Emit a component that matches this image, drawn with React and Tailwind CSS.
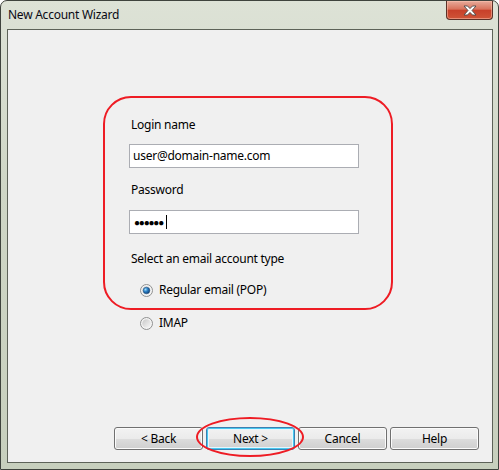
import React from 'react';

const font = "font-['Noto_Sans',sans-serif]";

const Radio = ({ checked, id }) => (
    <svg width="13" height="13" viewBox="0 0 13 13">
        <defs>
            <linearGradient id={`ring-${id}`} x1="0" y1="0" x2="1" y2="1">
                <stop offset="0" stopColor="#c8c8c8" />
                <stop offset="1" stopColor="#f8f8f8" />
            </linearGradient>
            <radialGradient id={`dot-${id}`} cx="0.35" cy="0.35" r="0.7">
                <stop offset="0" stopColor="#9fdcf8" />
                <stop offset="0.45" stopColor="#2d82c8" />
                <stop offset="1" stopColor="#103e74" />
            </radialGradient>
        </defs>
        <circle cx="6.5" cy="6.5" r="6" fill="#f4f4f4" stroke="#8f9090" strokeWidth="1" />
        <circle cx="6.5" cy="6.5" r="4.3" fill={`url(#ring-${id})`} />
        {checked && <circle cx="6.5" cy="6.5" r="3.3" fill={`url(#dot-${id})`} stroke="#1a4a7a" strokeWidth="0.5" />}
    </svg>
);

const Button = ({ children, focused }) => (
    <button
        className={`w-[89px] h-[23px] rounded-[3px] border text-[12px] text-black flex items-center justify-center bg-[linear-gradient(to_bottom,#f2f2f2_0%,#ebebeb_50%,#dddddd_50%,#cfcfcf_100%)] ${
            focused
                ? 'border-[#3c7fb1] shadow-[inset_0_0_0_1px_#48c8f0,inset_0_0_0_2px_#e6f6fd]'
                : 'border-[#707070] shadow-[inset_0_0_0_1px_#fbfbfb]'
        }`}
    >
        {children}
    </button>
);

export default function App() {
    return (
        <div className={`w-[499px] h-[470px] ${font} text-[12px] tracking-[-0.25px] text-black`}>
            <div className="w-full h-full flex flex-col rounded-t-[7px] border border-[#3f433d] bg-[linear-gradient(to_bottom,#dde2d6_0%,#cfd6c6_40%,#c7cfbd_100%)]">
                {/* title bar */}
                <div className="h-[28px] flex items-start justify-between">
                    <div className="h-[28px] flex items-center pl-[7px] text-[#0a0a14]">New Account Wizard</div>
                    <div className="mr-[5px] w-[47px] h-[19px] rounded-b-[4px] border border-t-0 border-[#5b3128] bg-[linear-gradient(to_bottom,#e7ab9b_0%,#d8735c_45%,#c8402a_52%,#cf5438_100%)] shadow-[inset_0_0_0_1px_rgba(255,200,180,0.5)] flex items-center justify-center">
                        <svg width="14" height="11" viewBox="0 0 14 11">
                            <path
                                d="M1 1 L4.5 1 L7 3.6 L9.5 1 L13 1 L9 5.5 L13 10 L9.5 10 L7 7.4 L4.5 10 L1 10 L5 5.5 Z"
                                fill="#ffffff"
                                stroke="#4a4a4a"
                                strokeWidth="0.9"
                                strokeLinejoin="round"
                            />
                        </svg>
                    </div>
                </div>

                {/* client area */}
                <div className="relative ml-[6px] mr-[5px] mb-[6px] flex-1 border border-[#5d6258] bg-[#f0f0f0] flex flex-col">
                    <div className="ml-[95px] mt-[66px] w-[290px] border-2 border-[#ee1c24] rounded-[28px] pl-[24px] pt-[19px] pb-[10px]">
                        <div className="leading-4 ml-[2px]">Login name</div>
                        <div className="mt-[11px] w-[230px] h-[24px] border border-[#abadb3] bg-white flex items-center px-[3px]">
                            user@domain-name.com
                        </div>
                        <div className="mt-[14px] leading-4 ml-[2px]">Password</div>
                        <div className="mt-[12px] w-[230px] h-[24px] border border-[#abadb3] bg-white flex items-center pl-[4px]">
                            <span className="text-[10px] tracking-[-1.2px]">●●●●●●</span>
                            <span className="ml-[3px] w-px h-[14px] bg-black"></span>
                        </div>
                        <div className="mt-[17px] leading-4 ml-[2px]">Select an email account type</div>
                        <div className="mt-[15px] ml-[11px] flex items-center gap-[6px] leading-4">
                            <Radio checked id="pop" />
                            <span>Regular email (POP)</span>
                        </div>
                    </div>
                    <div className="mt-[5px] ml-[132px] flex items-center gap-[6px] leading-4">
                        <Radio id="imap" />
                        <span>IMAP</span>
                    </div>

                    <div className="mt-auto mb-[12px] mr-[13px] flex justify-end gap-[3px]">
                        <Button>&lt; Back</Button>
                        <Button focused>Next &gt;</Button>
                        <Button>Cancel</Button>
                        <Button>Help</Button>
                    </div>

                    {/* annotation ring around Next */}
                    <div className="absolute left-[188px] top-[387px] w-[108px] h-[40px] rounded-[50%] border-2 border-[#ee1c24] pointer-events-none"></div>
                </div>
            </div>
        </div>
    );
}
